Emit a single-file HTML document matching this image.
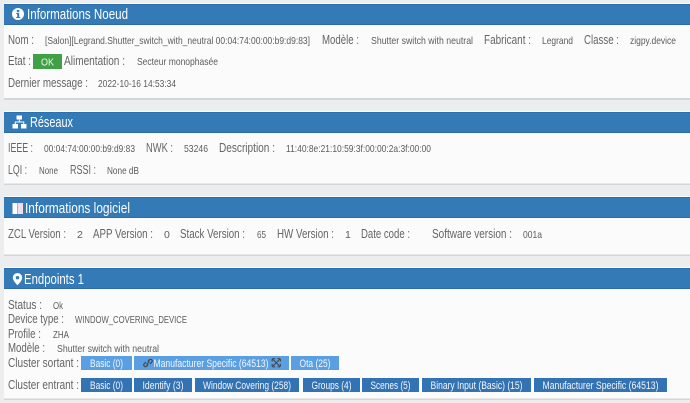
<!DOCTYPE html>
<html><head><meta charset="utf-8"><style>
html,body{margin:0;padding:0;width:690px;height:403px;overflow:hidden;background:#ecedee}
svg{display:block;filter:blur(.25px)}
text{font-family:"Liberation Sans",sans-serif}
.l{font-size:12.5px;fill:#656565}
.v{font-size:10.5px;fill:#5c5c5c}
.h{font-size:15px;fill:#fff}
.b{font-size:11px;fill:#f4f7fb;text-anchor:middle}
</style></head><body>
<svg width="690" height="403" viewBox="0 0 690 403" xmlns="http://www.w3.org/2000/svg">
<rect width="690" height="403" fill="#ecedee"/>
<!-- panels -->
<g>
<rect x="4" y="3" width="686" height="97" fill="#d4d5d5"/><rect x="4" y="3" width="686" height="95" fill="#fbfbfb"/>
<rect x="4" y="4" width="686" height="21" fill="#337ab7"/><rect x="4" y="4" width="686" height="1" fill="#2a6fb0"/><rect x="4" y="24" width="686" height="1" fill="#2e6da4"/>
<rect x="4" y="111" width="686" height="74" fill="#d4d5d5"/><rect x="4" y="111" width="686" height="72.500" fill="#fbfbfb"/>
<rect x="4" y="112" width="686" height="21" fill="#337ab7"/><rect x="4" y="112" width="686" height="1" fill="#2a6fb0"/><rect x="4" y="132" width="686" height="1" fill="#2e6da4"/>
<rect x="4" y="196" width="686" height="60" fill="#d4d5d5"/><rect x="4" y="196" width="686" height="58.500" fill="#fbfbfb"/>
<rect x="4" y="197" width="686" height="21" fill="#337ab7"/><rect x="4" y="197" width="686" height="1" fill="#2a6fb0"/><rect x="4" y="217" width="686" height="1" fill="#2e6da4"/>
<rect x="4" y="267" width="686" height="133" fill="#d4d5d5"/><rect x="4" y="267" width="686" height="131.500" fill="#fbfbfb"/>
<rect x="4" y="268" width="686" height="21" fill="#337ab7"/><rect x="4" y="268" width="686" height="1" fill="#2a6fb0"/><rect x="4" y="288" width="686" height="1" fill="#2e6da4"/>
</g>
<!-- icons -->
<circle cx="18" cy="14" r="6" fill="#fff"/><rect x="16.800" y="10" width="2.500" height="2.200" fill="#337ab7"/><path d="M16.200 13h3v4h1v1h-4v-1h1v-3h-1z" fill="#337ab7"/>
<g fill="#fff"><rect x="16.500" y="115.500" width="5.500" height="4"/><rect x="12.500" y="124" width="5.500" height="4.500"/><rect x="21" y="124" width="5.500" height="4.500"/></g>
<path d="M19.300 119.500v2.500M15.300 124v-2h8.500v2" stroke="#fff" fill="none"/>
<rect x="12.500" y="203" width="5" height="11" fill="#fff"/><rect x="18" y="203" width="5" height="11" fill="#f1dfe3"/>
<path d="M17.500 273a4.700 4.700 0 0 0-4.700 4.700c0 3 4.700 7.500 4.700 7.500s4.700-4.500 4.700-7.500a4.700 4.700 0 0 0-4.700-4.700z" fill="#fff"/><circle cx="17.500" cy="277.700" r="1.700" fill="#337ab7"/>
<!-- headers -->
<text class="h" x="27" y="19" textLength="101" lengthAdjust="spacingAndGlyphs">Informations Noeud</text>
<text class="h" x="30" y="127" textLength="43" lengthAdjust="spacingAndGlyphs">Réseaux</text>
<text class="h" x="25" y="213" textLength="105" lengthAdjust="spacingAndGlyphs">Informations logiciel</text>
<text class="h" x="24" y="284" textLength="60" lengthAdjust="spacingAndGlyphs">Endpoints 1</text>
<!-- panel 1 -->
<text class="l" x="8" y="44" textLength="26" lengthAdjust="spacingAndGlyphs">Nom :</text>
<text class="v" x="45" y="44" textLength="265" lengthAdjust="spacingAndGlyphs">[Salon][Legrand.Shutter_switch_with_neutral 00:04:74:00:00:b9:d9:83]</text>
<text class="l" x="322" y="44" textLength="37" lengthAdjust="spacingAndGlyphs">Modèle :</text>
<text class="v" x="371" y="44" textLength="102" lengthAdjust="spacingAndGlyphs">Shutter switch with neutral</text>
<text class="l" x="484" y="44" textLength="47" lengthAdjust="spacingAndGlyphs">Fabricant :</text>
<text class="v" x="542" y="44" textLength="31" lengthAdjust="spacingAndGlyphs">Legrand</text>
<text class="l" x="584" y="44" textLength="35" lengthAdjust="spacingAndGlyphs">Classe :</text>
<text class="v" x="630" y="44" textLength="46" lengthAdjust="spacingAndGlyphs">zigpy.device</text>
<text class="l" x="8" y="65" textLength="23" lengthAdjust="spacingAndGlyphs">Etat :</text>
<rect x="33" y="54" width="29" height="15" fill="#3fa045"/>
<text x="47.500" y="65.500" font-size="10.500" fill="#f2f9f2" text-anchor="middle" textLength="13" lengthAdjust="spacingAndGlyphs">OK</text>
<text class="l" x="64" y="65" textLength="61" lengthAdjust="spacingAndGlyphs">Alimentation :</text>
<text class="v" x="137" y="65" textLength="81" lengthAdjust="spacingAndGlyphs">Secteur monophasée</text>
<text class="l" x="8" y="87" textLength="80" lengthAdjust="spacingAndGlyphs">Dernier message :</text>
<text class="v" x="98" y="87" textLength="78" lengthAdjust="spacingAndGlyphs">2022-10-16 14:53:34</text>
<!-- panel 2 -->
<text class="l" x="8" y="152" textLength="25" lengthAdjust="spacingAndGlyphs">IEEE :</text>
<text class="v" x="44" y="152" textLength="91" lengthAdjust="spacingAndGlyphs">00:04:74:00:00:b9:d9:83</text>
<text class="l" x="146" y="152" textLength="27" lengthAdjust="spacingAndGlyphs">NWK :</text>
<text class="v" x="184" y="152" textLength="24" lengthAdjust="spacingAndGlyphs">53246</text>
<text class="l" x="219" y="152" textLength="56" lengthAdjust="spacingAndGlyphs">Description :</text>
<text class="v" x="286" y="152" textLength="145" lengthAdjust="spacingAndGlyphs">11:40:8e:21:10:59:3f:00:00:2a:3f:00:00</text>
<text class="l" x="8" y="174" textLength="19" lengthAdjust="spacingAndGlyphs">LQI :</text>
<text class="v" x="39" y="174" textLength="19" lengthAdjust="spacingAndGlyphs">None</text>
<text class="l" x="70" y="174" textLength="26" lengthAdjust="spacingAndGlyphs">RSSI :</text>
<text class="v" x="107" y="174" textLength="32" lengthAdjust="spacingAndGlyphs">None dB</text>
<!-- panel 3 -->
<text class="l" x="8" y="238" textLength="58" lengthAdjust="spacingAndGlyphs">ZCL Version :</text>
<text class="v" x="77" y="238">2</text>
<text class="l" x="93" y="238" textLength="60" lengthAdjust="spacingAndGlyphs">APP Version :</text>
<text class="v" x="164" y="238">0</text>
<text class="l" x="180" y="238" textLength="65" lengthAdjust="spacingAndGlyphs">Stack Version :</text>
<text class="v" x="257" y="238" textLength="9" lengthAdjust="spacingAndGlyphs">65</text>
<text class="l" x="277" y="238" textLength="57" lengthAdjust="spacingAndGlyphs">HW Version :</text>
<text class="v" x="345" y="238">1</text>
<text class="l" x="361" y="238" textLength="49" lengthAdjust="spacingAndGlyphs">Date code :</text>
<text class="l" x="432" y="238" textLength="80" lengthAdjust="spacingAndGlyphs">Software version :</text>
<text class="v" x="523" y="238" textLength="19" lengthAdjust="spacingAndGlyphs">001a</text>
<!-- panel 4 -->
<text class="l" x="8" y="309" textLength="34" lengthAdjust="spacingAndGlyphs">Status :</text>
<text class="v" x="53" y="309" textLength="10" lengthAdjust="spacingAndGlyphs">Ok</text>
<text class="l" x="8" y="323" textLength="56" lengthAdjust="spacingAndGlyphs">Device type :</text>
<text class="v" x="75" y="323" textLength="112" lengthAdjust="spacingAndGlyphs">WINDOW_COVERING_DEVICE</text>
<text class="l" x="8" y="338" textLength="33" lengthAdjust="spacingAndGlyphs">Profile :</text>
<text class="v" x="53" y="338" textLength="16" lengthAdjust="spacingAndGlyphs">ZHA</text>
<text class="l" x="8" y="352" textLength="37" lengthAdjust="spacingAndGlyphs">Modèle :</text>
<text class="v" x="57" y="352" textLength="102" lengthAdjust="spacingAndGlyphs">Shutter switch with neutral</text>
<text class="l" x="8" y="367" textLength="71" lengthAdjust="spacingAndGlyphs">Cluster sortant :</text>
<g fill="#5b9fe3">
<rect x="81" y="356" width="51" height="14"/><rect x="134" y="356" width="155" height="14"/><rect x="291" y="356" width="48" height="14"/>
</g>
<text class="b" x="106.500" y="367" textLength="33" lengthAdjust="spacingAndGlyphs">Basic (0)</text>
<path d="M146.500 364.500l3-3M146 362l-1.800 1.800a1.700 1.700 0 0 0 2.400 2.400L148.300 364.500M150 364l1.800-1.800a1.700 1.700 0 0 0-2.400-2.400L147.700 361.500" stroke="#444" stroke-width="1.100" fill="none"/>
<text class="b" x="211" y="367" textLength="115" lengthAdjust="spacingAndGlyphs">Manufacturer Specific (64513)</text>
<path d="M272.500 359l7.500 7.500M280 359l-7.500 7.500M272.500 361.500a1.700 1.700 0 0 1 2.500-2.500M277.500 359a1.700 1.700 0 0 1 2.500 2.500M272.500 364a1.700 1.700 0 0 0 2.500 2.500M277.500 366.500a1.700 1.700 0 0 0 2.500-2.500" stroke="#444" stroke-width="1" fill="none"/>
<text class="b" x="315" y="367" textLength="31" lengthAdjust="spacingAndGlyphs">Ota (25)</text>
<text class="l" x="8" y="389" textLength="71" lengthAdjust="spacingAndGlyphs">Cluster entrant :</text>
<g fill="#3373b3">
<rect x="81" y="378" width="51" height="14"/><rect x="134" y="378" width="58" height="14"/><rect x="195" y="378" width="104" height="14"/><rect x="303" y="378" width="57" height="14"/><rect x="362" y="378" width="57" height="14"/><rect x="422" y="378" width="109" height="14"/><rect x="534" y="378" width="133" height="14"/>
</g>
<text class="b" x="106.500" y="389" textLength="33" lengthAdjust="spacingAndGlyphs">Basic (0)</text>
<text class="b" x="163" y="389" textLength="41" lengthAdjust="spacingAndGlyphs">Identify (3)</text>
<text class="b" x="247" y="389" textLength="88" lengthAdjust="spacingAndGlyphs">Window Covering (258)</text>
<text class="b" x="331.500" y="389" textLength="40" lengthAdjust="spacingAndGlyphs">Groups (4)</text>
<text class="b" x="390.500" y="389" textLength="40" lengthAdjust="spacingAndGlyphs">Scenes (5)</text>
<text class="b" x="476.500" y="389" textLength="92" lengthAdjust="spacingAndGlyphs">Binary Input (Basic) (15)</text>
<text class="b" x="600.500" y="389" textLength="116" lengthAdjust="spacingAndGlyphs">Manufacturer Specific (64513)</text>
</svg>
</body></html>
